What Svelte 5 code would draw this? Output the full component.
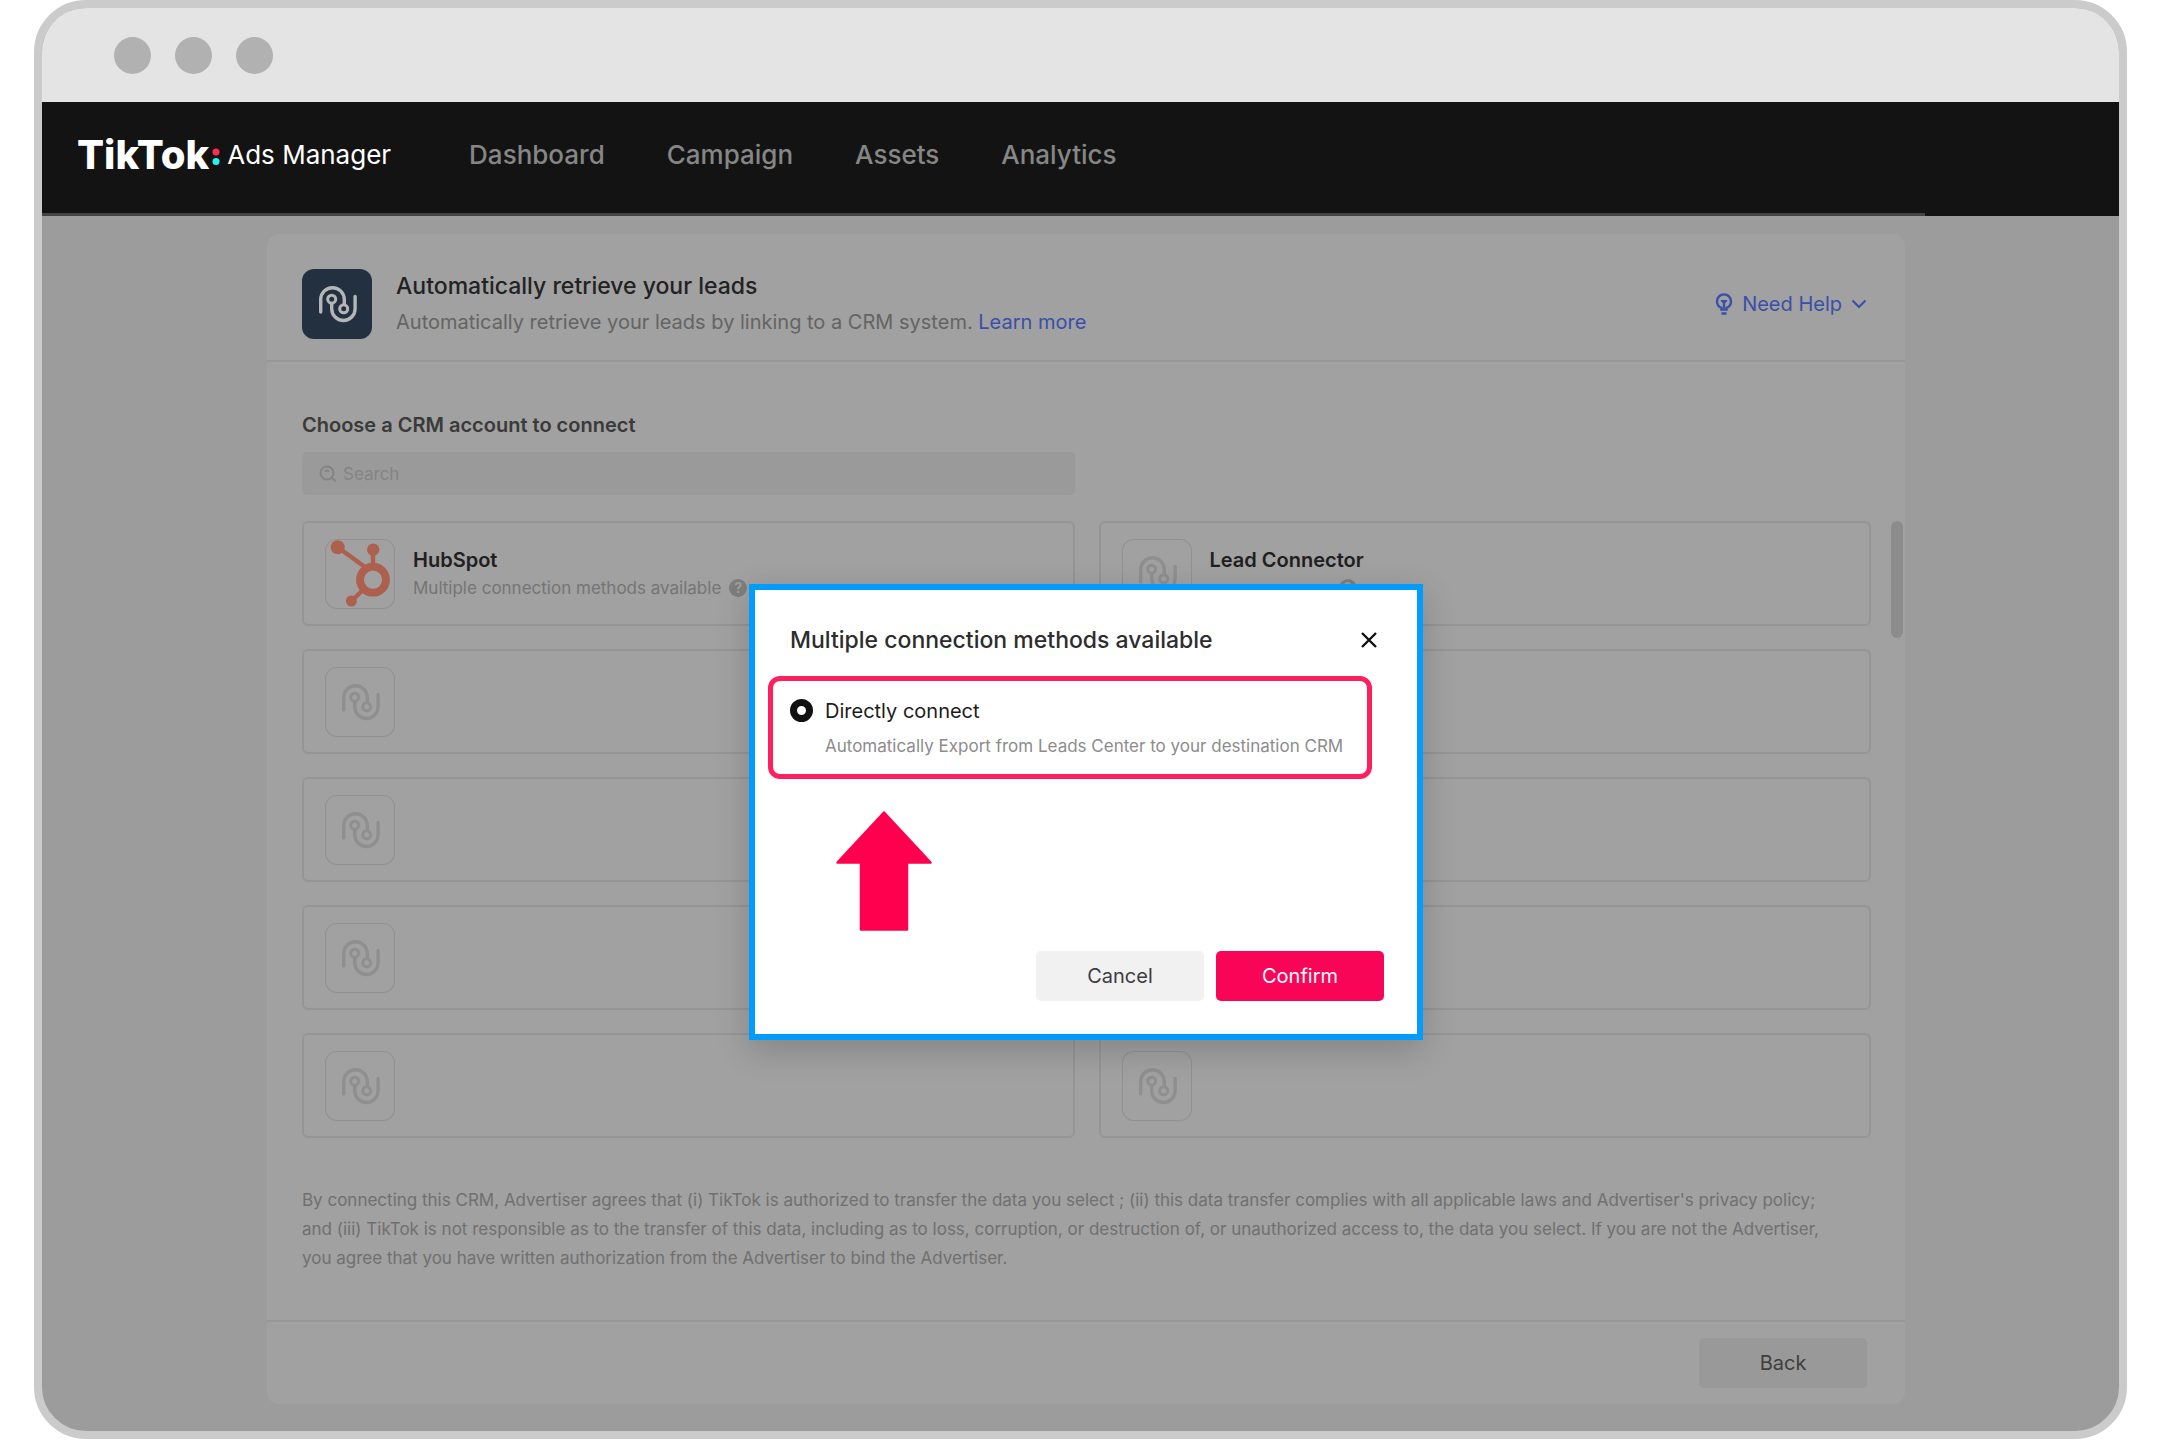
<script lang="ts">
  type Crm = { name?: string; hint?: string; hubspot?: boolean; help?: boolean };

  const navItems = ['Dashboard', 'Campaign', 'Assets', 'Analytics'];

  const crms: Crm[] = [
    { name: 'HubSpot', hint: 'Multiple connection methods available', hubspot: true, help: true },
    { name: 'Lead Connector', help: true },
    {}, {}, {}, {}, {}, {}, {}, {}
  ];

  let search = $state('');
  let method = $state('direct');
  let open = $state(true);

  const close = () => (open = false);
</script>

{#snippet connector()}
  <svg viewBox="0 0 70 70" fill="none" stroke="currentColor" stroke-width="3.4" stroke-linecap="round" aria-hidden="true">
    <path d="M18.7 43V30.5a11.8 11.8 0 0 1 23.6 0V35.5" />
    <path d="M29.7 34.5V39.8a11.7 11.7 0 0 0 23.4 0V27.5" />
    <circle cx="29.7" cy="30.2" r="4" stroke-width="3" />
    <circle cx="41.7" cy="39.8" r="4" stroke-width="3" />
  </svg>
{/snippet}

{#snippet hubspotLogo()}
  <svg viewBox="0 0 70 70" fill="none" stroke="#ad604e" stroke-width="4.4" aria-hidden="true">
    <path d="M12.7 8.3 40 28M48 11V28M26.5 62 39 50" />
    <circle cx="48" cy="40.7" r="13" stroke-width="7.8" />
    <g fill="#ad604e" stroke="none">
      <circle cx="12.7" cy="8.3" r="7" />
      <circle cx="48.2" cy="10.7" r="6.2" />
      <circle cx="26.4" cy="62" r="5.5" />
    </g>
  </svg>
{/snippet}

<div class="browser">
  <div class="titlebar">
    <span class="dot"></span>
    <span class="dot"></span>
    <span class="dot"></span>
  </div>

  <header class="navbar">
    <a class="brand" href="#home">
      <strong>TikTok</strong>
      <svg class="colon" viewBox="0 0 8 18" aria-hidden="true">
        <circle cx="4" cy="4" r="3.5" fill="#fe2c55" />
        <circle cx="4" cy="13.5" r="3.5" fill="#25f4ee" />
      </svg>
      <span>Ads Manager</span>
    </a>
    <nav>
      {#each navItems as item}
        <a href="#{item.toLowerCase()}">{item}</a>
      {/each}
    </nav>
  </header>
  <div class="nav-line"></div>

  <main>
    <section class="panel">
      <div class="panel-head">
        <div class="app-icon">{@render connector()}</div>
        <div class="intro">
          <h1>Automatically retrieve your leads</h1>
          <p>Automatically retrieve your leads by linking to a CRM system. <a href="#learn">Learn more</a></p>
        </div>
        <button class="need-help">
          <svg width="18" height="22" viewBox="0 0 18 22" fill="none" stroke="currentColor" stroke-width="2.4" aria-hidden="true">
            <path d="M6.4 16.5v-1.7C3.6 13.6 2 11.2 2 8.4a7 7 0 0 1 14 0c0 2.800-1.600 5.200-4.400 6.400v1.700z" />
            <path d="M6 7.500h6L9 11z" fill="currentColor" stroke-width="1" />
            <path d="M9 10v5M6.500 20.500h5" />
          </svg>
          Need Help
          <svg width="16" height="12" viewBox="0 0 16 12" fill="none" stroke="currentColor" stroke-width="2" aria-hidden="true">
            <path d="M1.500 2.500 8 9l6.500-6.500" />
          </svg>
        </button>
      </div>

      <div class="panel-body">
        <label for="crm-search">Choose a CRM account to connect</label>
        <div class="search">
          <svg width="18" height="18" viewBox="0 0 18 18" fill="none" stroke="currentColor" stroke-width="2" aria-hidden="true">
            <circle cx="8" cy="8" r="6.500" />
            <path d="m12.500 12.500 4 4M6 6.500C7 5 9 5 10 6.500" />
          </svg>
          <input id="crm-search" type="text" placeholder="Search" bind:value={search} />
        </div>

        <ul class="crm-grid">
          {#each crms as crm}
            <li class="crm">
              <div class="crm-logo">
                {#if crm.hubspot}{@render hubspotLogo()}{:else}{@render connector()}{/if}
              </div>
              {#if crm.name}
                <div class="crm-text">
                  <h2>{crm.name}</h2>
                  <p>
                    <span class="hint">{crm.hint ?? ''}</span>
                    {#if crm.help}<span class="help">?</span>{/if}
                  </p>
                </div>
              {/if}
            </li>
          {/each}
        </ul>
        <div class="scroll-thumb"></div>

        <p class="terms">
          By connecting this CRM, Advertiser agrees that (i) TikTok is authorized to transfer the data you select ; (ii) this data transfer complies with all applicable laws and Advertiser's privacy policy;<br />
          and (iii) TikTok is not responsible as to the transfer of this data, including as to loss, corruption, or destruction of, or unauthorized access to, the data you select. If you are not the Advertiser,<br />
          you agree that you have written authorization from the Advertiser to bind the Advertiser.
        </p>
      </div>

      <footer class="panel-foot">
        <button class="btn back">Back</button>
      </footer>

      {#if open}
        <div class="modal" role="dialog" aria-labelledby="modal-title">
          <div class="modal-head">
            <h2 id="modal-title">Multiple connection methods available</h2>
            <button class="close" aria-label="Close" onclick={close}>
              <svg width="16" height="16" viewBox="0 0 16 16" fill="none" stroke="currentColor" stroke-width="2.4" aria-hidden="true">
                <path d="m1 1 14 14M15 1 1 15" />
              </svg>
            </button>
          </div>

          <div class="option">
            <input id="direct" type="radio" name="method" value="direct" bind:group={method} />
            <div>
              <label for="direct">Directly connect</label>
              <p>Automatically Export from Leads Center to your destination CRM</p>
            </div>
          </div>

          <svg class="arrow" width="96" height="120" viewBox="0 0 96 120" aria-hidden="true">
            <path d="M48 1.500 94.500 51.500H71V118.500H25V51.500H1.500Z" fill="#ff004f" stroke="#ff004f" stroke-width="2.500" stroke-linejoin="round" />
          </svg>

          <div class="actions">
            <button class="btn cancel" onclick={close}>Cancel</button>
            <button class="btn confirm" onclick={close}>Confirm</button>
          </div>
        </div>
      {/if}
    </section>
  </main>
</div>

<style>
  :global(body) {
    background: #fff;
    font-family: Inter, 'Liberation Sans', sans-serif;
  }

  h1, h2, p, ul {
    margin: 0;
    padding: 0;
  }

  svg {
    display: block;
  }

  button {
    font: inherit;
    border: 0;
    padding: 0;
    cursor: pointer;
  }

  a {
    text-decoration: none;
  }

  .browser {
    margin: 0 33px 0 34px;
    border: 8px solid #cbcbcb;
    border-radius: 52px;
    background: #9c9c9c;
    overflow: hidden;
  }

  .titlebar {
    display: flex;
    align-items: center;
    gap: 24px;
    height: 94px;
    padding-left: 72px;
    background: #e4e4e4;
  }

  .dot {
    width: 37px;
    height: 37px;
    border-radius: 50%;
    background: #b1b1b1;
  }

  .navbar {
    display: flex;
    align-items: center;
    gap: 78px;
    height: 111px;
    padding: 0 35px 7px;
    box-sizing: border-box;
    background: #131313;
  }

  .brand {
    display: flex;
    align-items: center;
    color: #fff;
    font-size: 26px;
  }

  .brand strong {
    font-size: 40px;
    font-weight: 800;
  }

  .colon {
    width: 8px;
    height: 18px;
    margin: 6px 7px 0 3px;
  }

  nav {
    display: flex;
    gap: 62px;
  }

  nav a {
    color: #868686;
    font-size: 26px;
    font-weight: 500;
  }

  .nav-line {
    height: 3px;
    background: linear-gradient(90deg, #444 0 1883px, #131313 0);
  }

  main {
    padding: 18px 214px 27px 225px;
  }

  .panel {
    position: relative;
    border-radius: 12px;
    background: #a1a1a1;
  }

  .panel-head {
    display: flex;
    align-items: center;
    padding: 34px 38px 20px 35px;
    border-bottom: 2px solid #979797;
  }

  .app-icon {
    width: 70px;
    height: 70px;
    margin-right: 24px;
    border-radius: 12px;
    background: #223040;
    color: #b4b6b8;
  }

  .intro {
    flex: 1;
  }

  h1 {
    color: #222;
    font-size: 23px;
    font-weight: 500;
    line-height: 36px;
  }

  .intro p {
    color: #646464;
    font-size: 20px;
    line-height: 36px;
  }

  .intro a,
  .need-help {
    color: #3a4fa8;
  }

  .need-help {
    display: flex;
    align-items: center;
    gap: 9px;
    background: none;
    font-size: 20px;
  }

  .panel-body {
    position: relative;
    padding: 49px 34px 47px 35px;
  }

  .panel-body > label {
    display: block;
    margin-bottom: 13px;
    color: #3a3a3a;
    font-size: 20px;
    font-weight: 600;
    line-height: 28px;
  }

  .search {
    display: flex;
    align-items: center;
    gap: 6px;
    width: calc(50% - 12px);
    height: 43px;
    margin-bottom: 26px;
    padding: 0 17px;
    box-sizing: border-box;
    border-radius: 5px;
    background: #9a9a9a;
    color: #848484;
  }

  .search input {
    flex: 1;
    border: 0;
    outline: 0;
    padding: 0;
    background: none;
    color: #444;
    font: 17px Inter, 'Liberation Sans', sans-serif;
  }

  .search input::placeholder {
    color: #848484;
  }

  .crm-grid {
    display: grid;
    grid-template-columns: 1fr 1fr;
    gap: 23px 24px;
    list-style: none;
  }

  .crm {
    display: flex;
    align-items: center;
    gap: 18px;
    height: 105px;
    padding: 0 21px;
    box-sizing: border-box;
    border: 2px solid #959595;
    border-radius: 6px;
  }

  .crm-logo {
    width: 70px;
    height: 70px;
    box-sizing: border-box;
    border-radius: 12px;
    box-shadow: inset 0 0 0 1px #929090;
    color: #8f8f8f;
  }

  .crm-text h2 {
    color: #202020;
    font-size: 20px;
    font-weight: 600;
    line-height: 28px;
  }

  .crm-text p {
    display: flex;
    align-items: center;
    gap: 8px;
    min-height: 28px;
    color: #757575;
    font-size: 17px;
    line-height: 28px;
  }

  .hint {
    min-width: 121px;
  }

  .help {
    width: 18px;
    height: 18px;
    border-radius: 50%;
    background: #7e7e7e;
    color: #a1a1a1;
    font-size: 14px;
    font-weight: 600;
    line-height: 18px;
    text-align: center;
  }

  .scroll-thumb {
    position: absolute;
    top: 159px;
    right: 2px;
    width: 12px;
    height: 117px;
    border-radius: 6px;
    background: #8c8c8c;
  }

  .terms {
    margin-top: 48px;
    color: #707070;
    font-size: 17px;
    line-height: 29px;
  }

  .panel-foot {
    display: flex;
    justify-content: flex-end;
    padding: 16px 38px 16px;
    border-top: 2px solid #979797;
  }

  .btn {
    width: 168px;
    height: 50px;
    border-radius: 5px;
    font-size: 20px;
  }

  .back {
    background: #999;
    color: #3f3f3f;
  }

  .modal {
    position: absolute;
    top: 350px;
    left: 50%;
    display: flex;
    flex-direction: column;
    width: 674px;
    height: 456px;
    padding: 32px 33px 33px 34px;
    box-sizing: border-box;
    transform: translateX(-50%);
    border: 6px solid #009dff;
    background: #fff;
    box-shadow: 0 10px 32px rgba(0, 0, 0, 0.18);
  }

  .modal-head {
    display: flex;
    align-items: center;
    justify-content: space-between;
    padding: 0 7px 0 1px;
  }

  .modal-head h2 {
    color: #2d2d2d;
    font-size: 23px;
    font-weight: 500;
    line-height: 36px;
  }

  .close {
    background: none;
    color: #111;
  }

  .option {
    display: flex;
    gap: 12px;
    align-self: flex-start;
    margin: 18px 0 32px -21px;
    padding: 12px 24px 11px 17px;
    border: 5px solid #fe1f5e;
    border-radius: 12px;
  }

  .option input {
    appearance: none;
    width: 23px;
    height: 23px;
    margin: 6px 0 0;
    border: 7px solid #111;
    border-radius: 50%;
    background: #fff;
  }

  .option label {
    display: block;
    color: #1c1c1c;
    font-size: 20px;
    line-height: 36px;
  }

  .option p {
    color: #8c8c8c;
    font-size: 17px;
    line-height: 34px;
    white-space: nowrap;
  }

  .arrow {
    flex-shrink: 0;
    margin-left: 47px;
  }

  .actions {
    display: flex;
    justify-content: flex-end;
    gap: 12px;
    margin-top: auto;
  }

  .cancel {
    background: #f1f1f1;
    color: #3c3c3c;
  }

  .confirm {
    background: #f90557;
    color: #fff;
  }
</style>
